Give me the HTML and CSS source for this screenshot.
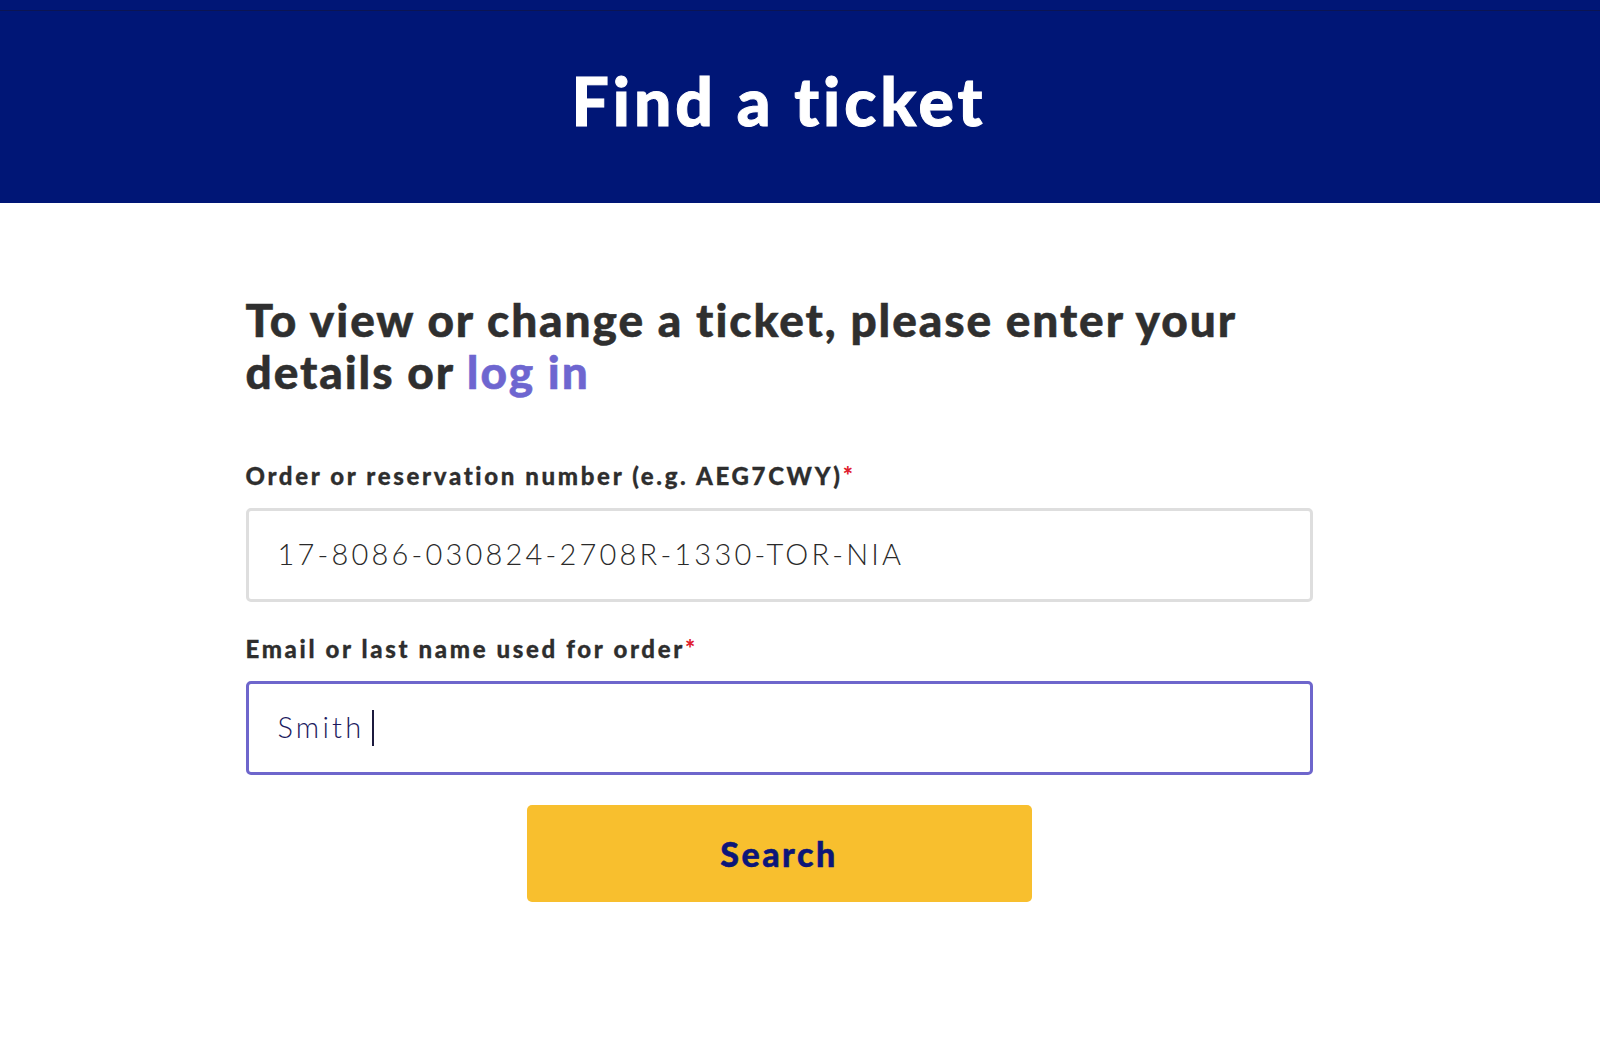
FILE: index.html
```html
<!DOCTYPE html>
<html lang="en">
<head>
<meta charset="utf-8">
<title>Find a ticket</title>
<link rel="stylesheet" href="styles.css">
</head>
<body>
  <header class="hero">
    <div class="hero-line"></div>
    <div class="hero-inner">
      <h1 class="hero-title">Find a ticket</h1>
    </div>
  </header>
  <div class="page">
    <main class="content">
      <h2 class="intro">To view or change a ticket, please enter your details or <a class="link" href="#">log in</a></h2>
      <form class="form">
        <label class="label">Order or reservation number (e.g. AEG7CWY)<span class="req">*</span></label>
        <div class="field">17-8086-030824-2708R-1330-TOR-NIA</div>
        <label class="label label-second">Email or last name used for order<span class="req">*</span></label>
        <div class="field field-focus"><span class="typed">Smith</span><span class="caret"></span></div>
        <div class="actions">
          <button type="button" class="btn">Search</button>
        </div>
      </form>
    </main>
  </div>
</body>
</html>
```
FILE: styles.css
```css
html, body {
  margin: 0;
  padding: 0;
  background: #ffffff;
}
body {
  font-family: "Lato", "Liberation Sans", sans-serif;
  color: #2f2f2f;
  font-variant-ligatures: none;
}
.hero {
  background: #001676;
  height: 203px;
  display: flex;
  flex-direction: column;
}
.hero-line {
  height: 1px;
  margin-top: 10px;
  background: #0c1552;
}
.hero-inner {
  width: 1558px;
  display: flex;
  justify-content: center;
}
.hero-title {
  margin: 50px 0 0 0;
  color: #ffffff;
  font-size: 66px;
  line-height: 80px;
  font-weight: 900;
  letter-spacing: 4px;
  -webkit-text-stroke: 1px #ffffff;
}
.page {
  width: 1558px;
}
.content {
  width: 1067px;
  margin: 0 auto;
  padding-top: 91px;
}
.intro {
  margin: 0;
  font-size: 46px;
  line-height: 52px;
  font-weight: 900;
  color: #2f2f2f;
  letter-spacing: 1.9px;
  width: 1040px;
  -webkit-text-stroke: 0.5px #2f2f2f;
}
.link {
  color: #6e66d0;
  text-decoration: none;
  -webkit-text-stroke: 0.5px #6e66d0;
}
.form {
  display: flex;
  flex-direction: column;
  margin-top: 63px;
}
.label {
  font-size: 24px;
  line-height: 30px;
  font-weight: 900;
  color: #2e2e2e;
  letter-spacing: 2.65px;
  margin-bottom: 17px;
  -webkit-text-stroke: 0.3px #2e2e2e;
}
.label-second {
  margin-top: 32px;
}
.req {
  color: #e0202e;
  -webkit-text-stroke: 0;
}
.field {
  box-sizing: border-box;
  height: 94px;
  border: 3px solid #dedede;
  border-radius: 5px;
  display: flex;
  align-items: center;
  padding-left: 29px;
  padding-bottom: 3px;
  font-size: 29px;
  font-weight: 300;
  letter-spacing: 3.2px;
  color: #2a2a2a;
}
.field-focus {
  border-color: #6e66cc;
  color: #1c1a5e;
}
.typed {
  margin-right: 8px;
}
.caret {
  width: 2px;
  height: 36px;
  margin-top: 3px;
  background: #1c1a3e;
}
.actions {
  display: flex;
  justify-content: center;
  margin-top: 30px;
}
.btn {
  width: 505px;
  height: 97px;
  border: none;
  border-radius: 5px;
  background: #f8bf2e;
  color: #0c1679;
  font-family: "Lato", "Liberation Sans", sans-serif;
  font-size: 34px;
  font-weight: 900;
  letter-spacing: 2.5px;
  -webkit-text-stroke: 0.5px #0c1679;
  cursor: pointer;
}
```
